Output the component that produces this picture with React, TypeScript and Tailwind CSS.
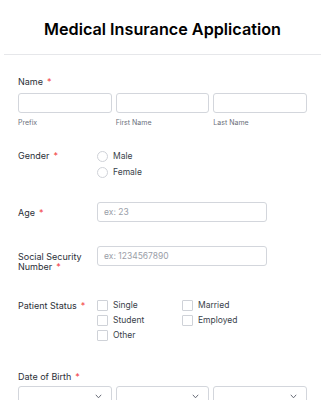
import React from "react";

const font = { fontFamily: "Inter, 'Noto Sans', sans-serif" };

function Req() {
  return <span className="ml-[4px] text-[#f23a3c]">*</span>;
}

function Radio({ label }: { label: string }) {
  return (
    <div className="flex h-[16px] items-center">
      <span className="h-[11px] w-[11px] rounded-full border border-[#cfd2d8] bg-white" />
      <span className="ml-[5px] text-[8.5px] text-[#3a3f4b]">{label}</span>
    </div>
  );
}

function Check({ label }: { label: string }) {
  return (
    <div className="flex h-[15px] items-center">
      <span className="h-[11px] w-[11px] rounded-[1px] border border-[#cfd2d8] bg-white" />
      <span className="ml-[5px] text-[8.5px] text-[#3a3f4b]">{label}</span>
    </div>
  );
}

function Chevron() {
  return (
    <svg width="7" height="5" viewBox="0 0 7 5" className="absolute right-[9px] top-[7px]">
      <path d="M0.8 0.8 L3.5 3.8 L6.2 0.8" fill="none" stroke="#5a5f6b" strokeWidth="0.9" />
    </svg>
  );
}

export default function App() {
  return (
    <div className="h-[400px] w-[325px] overflow-hidden bg-white" style={font}>
      <div className="mx-[4px] border-b border-[#e6e7ea] pb-[15px] pt-[19px] text-center">
        <h1 className="text-[16.2px] font-semibold leading-[20px] text-black">
          Medical Insurance Application
        </h1>
      </div>

      <div className="px-[18px] text-[#2b2f38]">
        {/* Name */}
        <div className="mt-[21px] text-[9px] leading-[12px]">
          Name
          <Req />
        </div>
        <div className="mt-[5px] grid grid-cols-3 gap-x-[4px]" style={{ width: 289 }}>
          {["Prefix", "First Name", "Last Name"].map((s) => (
            <div key={s}>
              <div className="h-[20px] rounded-[3px] border border-[#d3d6dc]" />
              <div className="mt-[6px] text-[7px] leading-[8px] text-[#6b707b]">{s}</div>
            </div>
          ))}
        </div>

        {/* Gender */}
        <div className="mt-[21px] flex">
          <div className="w-[79px] pt-[2px] text-[9px] leading-[12px]">
            Gender
            <Req />
          </div>
          <div>
            <Radio label="Male" />
            <Radio label="Female" />
          </div>
        </div>

        {/* Age */}
        <div className="mt-[22px] flex">
          <div className="w-[79px] pt-[6px] text-[9px] leading-[10px]">
            Age
            <Req />
          </div>
          <div className="flex h-[20px] w-[170px] items-center rounded-[3px] border border-[#d3d6dc] px-[6px] text-[8.5px] text-[#9a9ea8]">
            ex: 23
          </div>
        </div>

        {/* SSN */}
        <div className="mt-[24px] flex">
          <div className="w-[79px] pt-[6px] text-[9px] leading-[10px]">
            Social Security
            <br />
            Number
            <Req />
          </div>
          <div className="flex h-[20px] w-[170px] items-center rounded-[3px] border border-[#d3d6dc] px-[6px] text-[8.5px] text-[#9a9ea8]">
            ex: 1234567890
          </div>
        </div>

        {/* Patient Status */}
        <div className="mt-[26px] flex">
          <div className="w-[79px] pt-[2px] text-[9px] leading-[11px]">
            Patient Status
            <Req />
          </div>
          <div className="grid grid-cols-[85px_85px]">
            <Check label="Single" />
            <Check label="Married" />
            <Check label="Student" />
            <Check label="Employed" />
            <Check label="Other" />
          </div>
        </div>

        {/* Date of Birth */}
        <div className="mt-[28px] text-[9px] leading-[12px]">
          Date of Birth
          <Req />
        </div>
        <div className="mt-[3px] grid grid-cols-3 gap-x-[4px]" style={{ width: 289 }}>
          {[0, 1, 2].map((i) => (
            <div key={i} className="relative h-[20px] rounded-[3px] border border-[#d3d6dc]">
              <Chevron />
            </div>
          ))}
        </div>
      </div>
    </div>
  );
}
